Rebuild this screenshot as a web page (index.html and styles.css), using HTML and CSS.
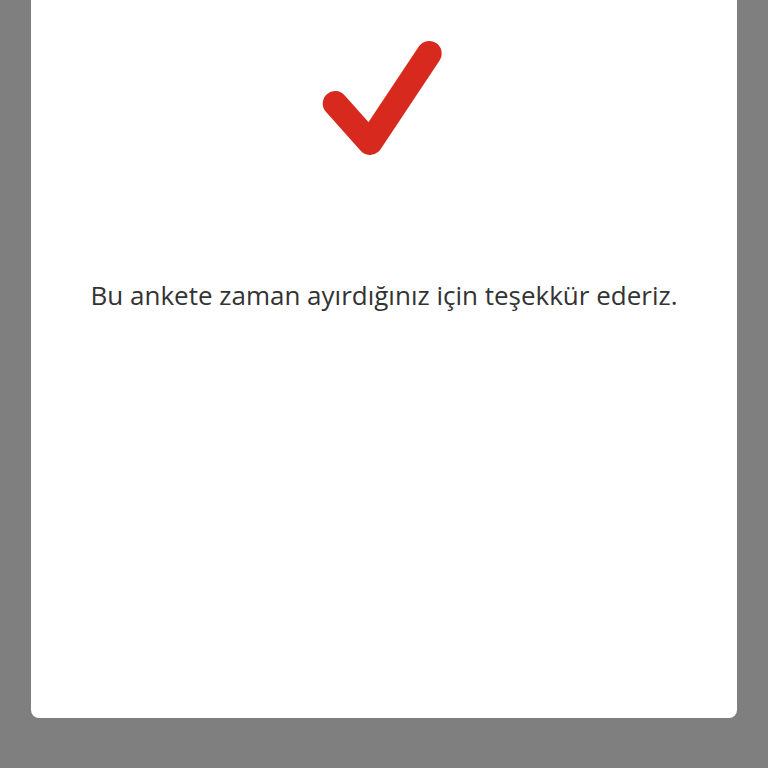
FILE: index.html
```html
<!DOCTYPE html>
<html lang="tr">
<head>
<meta charset="utf-8">
<title>Teşekkürler</title>
<link rel="stylesheet" href="styles.css">
</head>
<body>
<div class="backdrop">
  <div class="card">
    <svg class="check" width="140" height="130" viewBox="0 0 140 130" aria-hidden="true">
      <path d="M21.2 68.5 L56 107.5 L115.2 18.5" fill="none" stroke="#d8291f" stroke-width="25" stroke-linecap="round" stroke-linejoin="round"/>
    </svg>
    <p class="message">Bu ankete zaman ayırdığınız için teşekkür ederiz.</p>
  </div>
</div>
</body>
</html>
```
FILE: styles.css
```css
html, body {
  margin: 0;
  padding: 0;
}
body {
  background: #7f7f7f;
  width: 768px;
  height: 768px;
  overflow: hidden;
}
.backdrop {
  display: flex;
  justify-content: center;
  height: 768px;
}
.card {
  width: 706px;
  height: 718px;
  background: #ffffff;
  border-radius: 0 0 8px 8px;
  display: flex;
  flex-direction: column;
  align-items: center;
  padding-top: 35px;
  box-sizing: border-box;
}
.check {
  display: block;
}
.message {
  margin: 114px 0 0;
  font-family: "Open Sans", "Noto Sans", sans-serif;
  font-size: 26px;
  line-height: 32px;
  color: #333333;
  text-align: center;
}
```
